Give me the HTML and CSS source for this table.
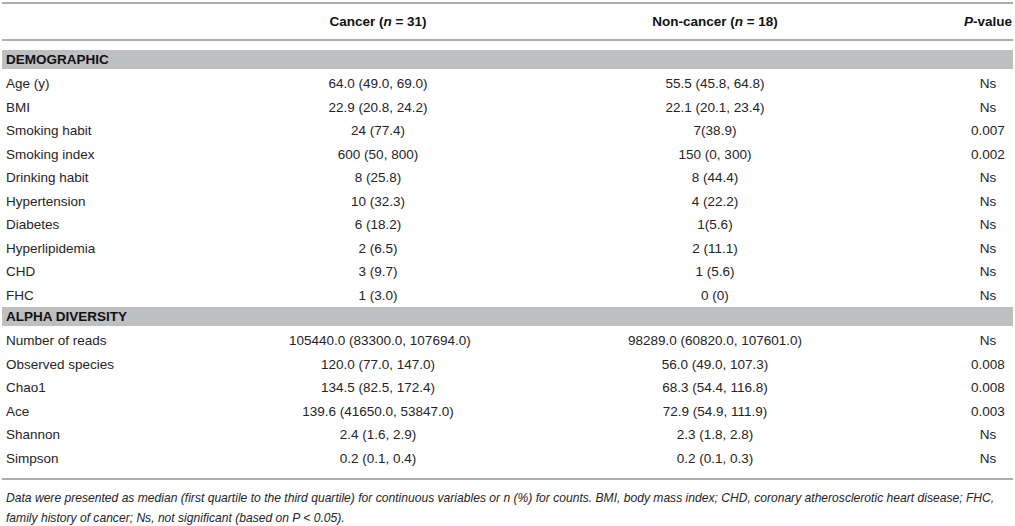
FILE: index.html
```html
<!DOCTYPE html>
<html lang="en">
<head>
	<meta charset="UTF-8">
	<title>Table: Cancer vs Non-cancer</title>
	<link rel="stylesheet" href="styles.css">
</head>
<body>
	<div class="wrap">
		<div class="data-table">
			<div class="row head">
				<div class="label"></div>
				<div class="num">Cancer (<i>n</i> = 31)</div>
				<div class="num">Non-cancer (<i>n</i> = 18)</div>
				<div class="num"><i>P</i>-value</div>
			</div>

			<div class="band">DEMOGRAPHIC</div>
			<div class="row"><div class="label">Age (y)</div><div class="num">64.0 (49.0, 69.0)</div><div class="num">55.5 (45.8, 64.8)</div><div class="num">Ns</div></div>
			<div class="row"><div class="label">BMI</div><div class="num">22.9 (20.8, 24.2)</div><div class="num">22.1 (20.1, 23.4)</div><div class="num">Ns</div></div>
			<div class="row"><div class="label">Smoking habit</div><div class="num">24 (77.4)</div><div class="num">7(38.9)</div><div class="num">0.007</div></div>
			<div class="row"><div class="label">Smoking index</div><div class="num">600 (50, 800)</div><div class="num">150 (0, 300)</div><div class="num">0.002</div></div>
			<div class="row"><div class="label">Drinking habit</div><div class="num">8 (25.8)</div><div class="num">8 (44.4)</div><div class="num">Ns</div></div>
			<div class="row"><div class="label">Hypertension</div><div class="num">10 (32.3)</div><div class="num">4 (22.2)</div><div class="num">Ns</div></div>
			<div class="row"><div class="label">Diabetes</div><div class="num">6 (18.2)</div><div class="num">1(5.6)</div><div class="num">Ns</div></div>
			<div class="row"><div class="label">Hyperlipidemia</div><div class="num">2 (6.5)</div><div class="num">2 (11.1)</div><div class="num">Ns</div></div>
			<div class="row"><div class="label">CHD</div><div class="num">3 (9.7)</div><div class="num">1 (5.6)</div><div class="num">Ns</div></div>
			<div class="row"><div class="label">FHC</div><div class="num">1 (3.0)</div><div class="num">0 (0)</div><div class="num">Ns</div></div>

			<div class="band">ALPHA DIVERSITY</div>
			<div class="row"><div class="label">Number of reads</div><div class="num">105440.0 (83300.0, 107694.0)</div><div class="num">98289.0 (60820.0, 107601.0)</div><div class="num">Ns</div></div>
			<div class="row"><div class="label">Observed species</div><div class="num">120.0 (77.0, 147.0)</div><div class="num">56.0 (49.0, 107.3)</div><div class="num">0.008</div></div>
			<div class="row"><div class="label">Chao1</div><div class="num">134.5 (82.5, 172.4)</div><div class="num">68.3 (54.4, 116.8)</div><div class="num">0.008</div></div>
			<div class="row"><div class="label">Ace</div><div class="num">139.6 (41650.0, 53847.0)</div><div class="num">72.9 (54.9, 111.9)</div><div class="num">0.003</div></div>
			<div class="row"><div class="label">Shannon</div><div class="num">2.4 (1.6, 2.9)</div><div class="num">2.3 (1.8, 2.8)</div><div class="num">Ns</div></div>
			<div class="row"><div class="label">Simpson</div><div class="num">0.2 (0.1, 0.4)</div><div class="num">0.2 (0.1, 0.3)</div><div class="num">Ns</div></div>
		</div>

		<p class="caption">Data were presented as median (first quartile to the third quartile) for continuous variables or n (%) for counts. BMI, body mass index; CHD, coronary atherosclerotic heart disease; FHC, family history of cancer; Ns, not significant (based on P &lt; 0.05).</p>
	</div>
</body>
</html>
```

FILE: styles.css
```css
/* Global */
body {
	margin: 0;
	background: #fff;
	color: #262425;
	font-family: 'Liberation Sans', Arial, sans-serif;
}

.wrap {
	padding: 2px 2px 0;
}

/* Table */
.data-table {
	border-top: 2px solid #adadad;
	border-bottom: 2px solid #adadad;
	padding-bottom: 8px;
}

.row {
	display: grid;
	grid-template-columns: 287px 178px 496px 50px;
	align-items: center;
	height: 23.5px;
	font-size: 13.5px;
}

.row.head {
	height: 35px;
	border-bottom: 2px solid #adadad;
	margin-bottom: 9px;
	font-weight: bold;
	color: #111;
}

/* small gap under each section band */
.band + .row {
	margin-top: 3px;
}

.label {
	padding-left: 4px;
}

.num {
	text-align: center;
	white-space: nowrap;
}

/* Section bands */
.band {
	height: 19px;
	line-height: 19px;
	padding-left: 4px;
	background: #bebfc1;
	color: #111;
	font-size: 13.5px;
	font-weight: bold;
}

/* Footnote */
.caption {
	margin: 0;
	padding: 9px 3px 0 4px;
	font-size: 12.1px;
	font-style: italic;
	line-height: 19.5px;
}
```
